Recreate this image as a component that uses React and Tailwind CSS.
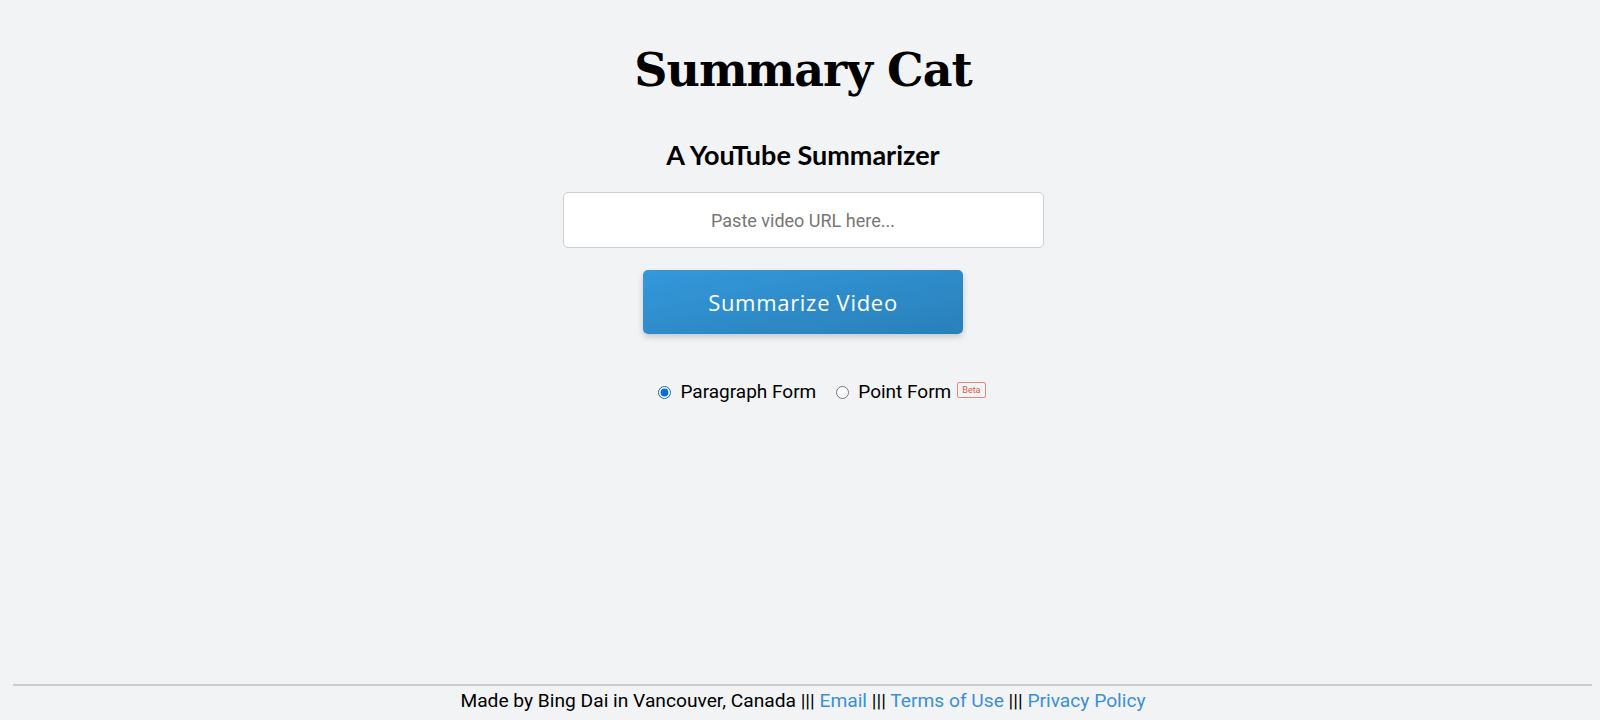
import { useState } from 'react';

export default function App() {
  const [url, setUrl] = useState('');
  const [mode, setMode] = useState('paragraph');

  return (
    <div className="flex min-h-screen flex-col bg-[#f2f3f5] font-['Roboto',sans-serif] text-black">
      <main className="flex flex-1 flex-col items-center pl-[6px]">
        <h1 className="mt-[40px] font-['DejaVu_Serif',serif] text-[46px] font-bold leading-[60px] tracking-[-1px]">Summary Cat</h1>
        <h2 className="mt-[37px] font-['Lato',sans-serif] text-[27px] font-bold leading-[36px]">A YouTube Summarizer</h2>

        <input
          type="text"
          value={url}
          onChange={(e) => setUrl(e.target.value)}
          placeholder="Paste video URL here..."
          className="mt-[19px] h-[56px] w-[481px] rounded-[5px] border border-[#cfcfcf] bg-white px-4 text-center text-[18px] text-black placeholder:text-[#767676] focus:outline-none"
        />

        <button
          type="button"
          className="mt-[22px] h-[64px] w-[320px] rounded-[5px] bg-gradient-to-br from-[#3498db] to-[#2980b9] font-['Open_Sans',sans-serif] text-[22px] tracking-[0.7px] text-white shadow-[0_3px_6px_rgba(0,0,0,0.18)]"
        >
          Summarize Video
        </button>

        <div className="mt-[44px] ml-[38px] flex items-center text-[19px]">
          <label className="flex items-center">
            <input
              type="radio"
              name="mode"
              checked={mode === 'paragraph'}
              onChange={() => setMode('paragraph')}
              className="m-0 h-[13px] w-[13px] accent-[#0b6bde]"
            />
            <span className="ml-[9px]">Paragraph Form</span>
          </label>
          <label className="ml-[20px] flex items-center">
            <input
              type="radio"
              name="mode"
              checked={mode === 'point'}
              onChange={() => setMode('point')}
              className="m-0 h-[13px] w-[13px]"
            />
            <span className="ml-[9px]">Point Form</span>
            <span className="ml-[6px] -mt-[4px] rounded-[2px] border border-[#e8857a] px-[4px] text-[9px] leading-[14px] text-[#e05a4a]">Beta</span>
          </label>
        </div>
      </main>

      <footer className="pb-[6px]">
        <div className="ml-[13px] mr-[8px] border-t-2 border-[#cccccc]" />
        <p className="mt-[2px] pl-[6px] text-center text-[19.2px] leading-[26px]">
          Made by Bing Dai in Vancouver, Canada |||{' '}
          <a href="#" className="text-[#3b8fd8]">Email</a> |||{' '}
          <a href="#" className="text-[#3b8fd8]">Terms of Use</a> |||{' '}
          <a href="#" className="text-[#3b8fd8]">Privacy Policy</a>
        </p>
      </footer>
    </div>
  );
}
